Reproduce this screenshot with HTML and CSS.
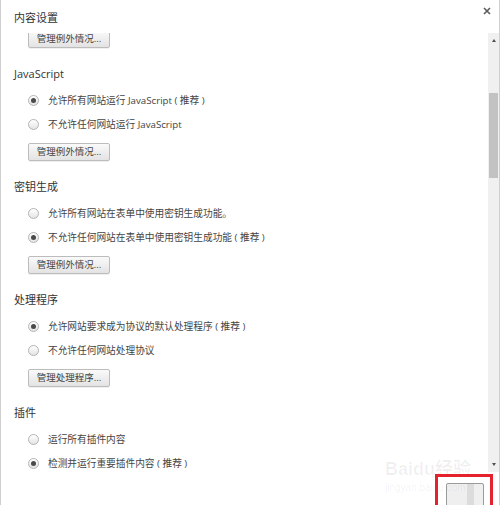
FILE: index.html
```html
<!DOCTYPE html>
<html lang="zh-CN">
<head>
  <meta charset="UTF-8" />
  <title>内容设置</title>
  <link rel="stylesheet" href="styles.css">
</head>
<body>

  <div class="dialog">
    <div class="dialog-header">
      <h2 class="dialog-title">内容设置</h2>
      <span class="close-btn" aria-label="关闭">
        <svg width="8" height="8" viewBox="0 0 8 8"><path d="M1 1L7 7M7 1L1 7" stroke="#5a5a5a" stroke-width="1.6"/></svg>
      </span>
    </div>

    <div class="dialog-body">
      <div class="content">
        <button class="btn btn-first">管理例外情况...</button>

        <section class="section">
          <h3>JavaScript</h3>
          <div class="radio-row"><span class="radio checked"></span>允许所有网站运行 JavaScript ( 推荐 )</div>
          <div class="radio-row"><span class="radio"></span>不允许任何网站运行 JavaScript</div>
          <button class="btn">管理例外情况...</button>
        </section>

        <section class="section">
          <h3>密钥生成</h3>
          <div class="radio-row"><span class="radio"></span>允许所有网站在表单中使用密钥生成功能。</div>
          <div class="radio-row"><span class="radio checked"></span>不允许任何网站在表单中使用密钥生成功能 ( 推荐 )</div>
          <button class="btn">管理例外情况...</button>
        </section>

        <section class="section">
          <h3>处理程序</h3>
          <div class="radio-row"><span class="radio checked"></span>允许网站要求成为协议的默认处理程序 ( 推荐 )</div>
          <div class="radio-row"><span class="radio"></span>不允许任何网站处理协议</div>
          <button class="btn">管理处理程序...</button>
        </section>

        <section class="section">
          <h3>插件</h3>
          <div class="radio-row"><span class="radio"></span>运行所有插件内容</div>
          <div class="radio-row"><span class="radio checked"></span>检测并运行重要插件内容 ( 推荐 )</div>
        </section>
      </div>

      <!-- fake scrollbar -->
      <div class="scrollbar">
        <span class="arrow arrow-up"></span>
        <span class="thumb"></span>
        <span class="arrow arrow-down"></span>
      </div>
    </div>

    <div class="dialog-footer">
      <span class="done-btn"></span>
    </div>

    <!-- watermark + red mark on top -->
    <div class="watermark">
      <span class="wm-logo">Baidu经验</span>
      <span class="wm-url">jingyan.baidu.com</span>
    </div>
    <div class="red-mark"></div>
  </div>

</body>
</html>
```

FILE: styles.css
```css
:root {
  --text: #333333;
  --text-light: #444444;
  --border: #cfcfcf;
  --track: #f0f0f0;
  --thumb: #c2c2c2;
}

* {
  box-sizing: border-box;
  margin: 0;
  padding: 0;
}

body {
  width: 500px;
  height: 505px;
  overflow: hidden;
  background: #ffffff;
  color: var(--text);
  font-family: "Open Sans", "Noto Sans CJK SC", sans-serif;
}

.dialog {
  position: relative;
  height: 505px;
  border-left: 1px solid var(--border);
  border-right: 1px solid var(--border);
  display: flex;
  flex-direction: column;
}

.dialog-header {
  height: 33px;
  display: flex;
  justify-content: space-between;
  align-items: flex-start;
  padding-left: 13px;
  flex-shrink: 0;
}

.dialog-title {
  font-size: 11px;
  font-weight: normal;
  line-height: 20px;
  padding-top: 8px;
}

.close-btn {
  display: block;
  width: 8px;
  height: 8px;
  margin-top: 7px;
  margin-right: 8px;
}

.close-btn svg {
  display: block;
}

.dialog-body {
  height: 439px;
  display: flex;
  flex-shrink: 0;
}

.content {
  flex: 1;
  overflow: hidden;
  padding-left: 13px;
}

.section h3 {
  font-size: 11px;
  font-weight: normal;
  line-height: 20px;
  margin-bottom: 4px;
}

.section {
  margin-top: 16px;
}

.radio-row {
  display: flex;
  align-items: center;
  height: 24px;
  padding-left: 14px;
  font-size: 9.7px;
  color: var(--text-light);
  white-space: nowrap;
}

.radio {
  width: 11px;
  height: 11px;
  border-radius: 50%;
  border: 1px solid #b4b4b4;
  background: linear-gradient(#ffffff, #e4e4e4);
  margin-right: 9px;
  flex-shrink: 0;
  display: flex;
  align-items: center;
  justify-content: center;
}

.radio.checked::after {
  content: "";
  width: 5px;
  height: 5px;
  border-radius: 50%;
  background: #4a4a4a;
}

.btn {
  display: block;
  width: 82px;
  height: 18px;
  margin: 7px 0 0 14px;
  border: 1px solid #bcbcbc;
  border-radius: 2px;
  background: linear-gradient(#fafafa, #e3e3e3);
  box-shadow: 0 1px 0 rgba(0, 0, 0, 0.06);
  font-family: inherit;
  font-size: 9.5px;
  color: var(--text-light);
  line-height: 16px;
}

.btn-first {
  margin-top: -3px;
}

/* Scrollbar */
.scrollbar {
  width: 11px;
  background: var(--track);
  display: flex;
  flex-direction: column;
  align-items: center;
  flex-shrink: 0;
}

.arrow {
  width: 0;
  height: 0;
  border-left: 2.5px solid transparent;
  border-right: 2.5px solid transparent;
}

.arrow-up {
  margin-top: 6px;
  border-bottom: 3px solid #505050;
}

.thumb {
  width: 9px;
  height: 85px;
  margin-top: 51px;
  background: var(--thumb);
}

.arrow-down {
  margin-top: auto;
  margin-bottom: 6px;
  border-top: 3px solid #505050;
}

.dialog-footer {
  flex: 1;
  display: flex;
  justify-content: flex-end;
  padding: 11px 15px 0 0;
}

.done-btn {
  display: block;
  width: 38px;
  height: 30px;
  border: 1px solid #9a9a9a;
  border-radius: 2px;
  background: linear-gradient(90deg, #efefef 0%, #efefef 55%, #dcdcdc 55%, #dcdcdc 75%, #efefef 75%);
}

/* Watermark */
.watermark {
  position: absolute;
  left: 384px;
  top: 457px;
  display: flex;
  flex-direction: column;
  align-items: flex-start;
  color: rgba(0, 0, 0, 0.06);
  font-family: "Liberation Sans", "Noto Sans CJK SC", sans-serif;
  pointer-events: none;
}

.wm-logo {
  font-size: 18px;
  font-weight: bold;
  line-height: 24px;
}

.wm-url {
  font-size: 10px;
  line-height: 14px;
}

.red-mark {
  position: absolute;
  left: 434px;
  top: 474px;
  width: 58px;
  height: 40px;
  border: 3px solid #e5212b;
  pointer-events: none;
}
```
